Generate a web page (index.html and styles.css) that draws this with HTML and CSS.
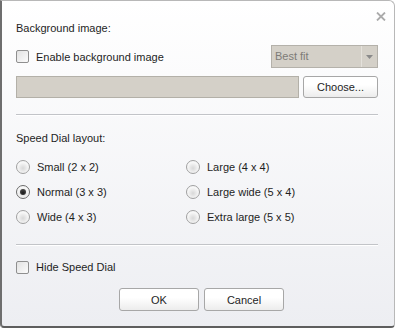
FILE: index.html
```html
<!DOCTYPE html>
<html lang="en">
<head>
    <meta charset="UTF-8">
    <title>Speed Dial settings</title>
    <link rel="stylesheet" href="styles.css">
</head>
<body>
    <div class="dialog">
        <svg class="close" width="10" height="9" viewBox="0 0 10 9"><path d="M1 0.5l8 8M9 0.5l-8 8" stroke="#ababab" stroke-width="1.8"/></svg>

        <p class="label first">Background image:</p>
        <div class="row bg-row">
            <label class="check"><span class="box"></span>Enable background image</label>
            <div class="select">
                <span class="select-text">Best fit</span>
                <span class="select-arrow"><svg width="7" height="4" viewBox="0 0 7 4"><path d="M0 0h7L3.5 4z" fill="#8a8a8a"/></svg></span>
            </div>
        </div>
        <div class="row file-row">
            <div class="field"></div>
            <button class="btn choose">Choose...</button>
        </div>

        <hr>

        <p class="label">Speed Dial layout:</p>
        <div class="radios">
            <label class="radio"><span class="dot"></span>Small (2 x 2)</label>
            <label class="radio"><span class="dot"></span>Large (4 x 4)</label>
            <label class="radio"><span class="dot on"></span>Normal (3 x 3)</label>
            <label class="radio"><span class="dot"></span>Large wide (5 x 4)</label>
            <label class="radio"><span class="dot"></span>Wide (4 x 3)</label>
            <label class="radio"><span class="dot"></span>Extra large (5 x 5)</label>
        </div>

        <hr>

        <label class="check hide"><span class="box"></span>Hide Speed Dial</label>

        <div class="buttons">
            <button class="btn">OK</button>
            <button class="btn">Cancel</button>
        </div>
    </div>
</body>
</html>
```

FILE: styles.css
```css
body {
    margin: 0;
    background-color: #fff;
    font-family: "Liberation Sans", Arial, sans-serif;
    font-size: 11px;
    color: #1e1e1e;
}

.dialog {
    position: relative;
    box-sizing: border-box;
    width: 395px;
    height: 328px;
    padding: 0 16px 0 14px;
    border: 1px solid #b8b8b8;
    border-left: 2px solid #6e6e6e;
    border-bottom: 2px solid #5e5e5e;
    border-radius: 0 6px 4px 4px;
    background: linear-gradient(#ffffff, #edeef2);
}

.close {
    position: absolute;
    top: 11px;
    right: 8px;
}

.label {
    margin: 0;
    line-height: 14px;
}

.label.first {
    padding-top: 20px;
}

.row {
    display: flex;
    align-items: center;
    justify-content: space-between;
}

.bg-row {
    margin-top: 10px;
    height: 23px;
}

.check {
    display: flex;
    align-items: center;
    gap: 7px;
    line-height: 14px;
}

.box {
    box-sizing: border-box;
    width: 13px;
    height: 13px;
    border: 1px solid #8f8f8f;
    border-radius: 2px;
    background: linear-gradient(135deg, #e2e2e2, #fbfbfb);
}

.select {
    box-sizing: border-box;
    display: flex;
    width: 107px;
    height: 23px;
    border: 1px solid #b4b1aa;
    background-color: #d4d0c8;
}

.select-text {
    flex: 1;
    padding-left: 3px;
    line-height: 21px;
    color: #7d7b77;
}

.select-arrow {
    display: flex;
    align-items: center;
    justify-content: center;
    width: 15px;
    border-left: 1px solid #e4e1db;
}

.file-row {
    margin-top: 8px;
    gap: 4px;
}

.field {
    box-sizing: border-box;
    flex: 1;
    height: 22px;
    border: 1px solid #b3b0a8;
    background-color: #d4d0c8;
}

.btn {
    box-sizing: border-box;
    height: 23px;
    padding: 0;
    border: 1px solid #a7a7a7;
    border-radius: 3px;
    background: linear-gradient(#ffffff 40%, #ececec);
    font-family: inherit;
    font-size: 11px;
    color: #1e1e1e;
}

.choose {
    width: 75px;
    height: 22px;
}

hr {
    margin: 16px 0 0;
    height: 0;
    border: 0;
    border-top: 1px solid #c2c4c8;
    border-bottom: 1px solid #ffffff;
}

hr + .label {
    margin-top: 15px;
}

.radios {
    display: grid;
    grid-template-columns: 170px 1fr;
    row-gap: 10px;
    margin-top: 14px;
}

.radio {
    display: flex;
    align-items: center;
    gap: 7px;
    height: 15px;
}

.dot {
    box-sizing: border-box;
    display: flex;
    align-items: center;
    justify-content: center;
    width: 14px;
    height: 14px;
    border: 1px solid #a0a0a0;
    border-radius: 50%;
    background: radial-gradient(circle at 50% 60%, #d8d8d8, #f7f7f7 60%);
}

.dot.on {
    border-color: #6a6a6a;
}

.dot.on::after {
    content: "";
    width: 6px;
    height: 6px;
    border-radius: 50%;
    background: radial-gradient(circle at 50% 65%, #1a1a1a, #555);
}

.radios + hr {
    margin-top: 20px;
}

.hide {
    margin-top: 14px;
}

.buttons {
    display: flex;
    justify-content: center;
    gap: 5px;
    margin-top: 14px;
    padding-left: 9px;
}

.buttons .btn {
    width: 80px;
}
```
